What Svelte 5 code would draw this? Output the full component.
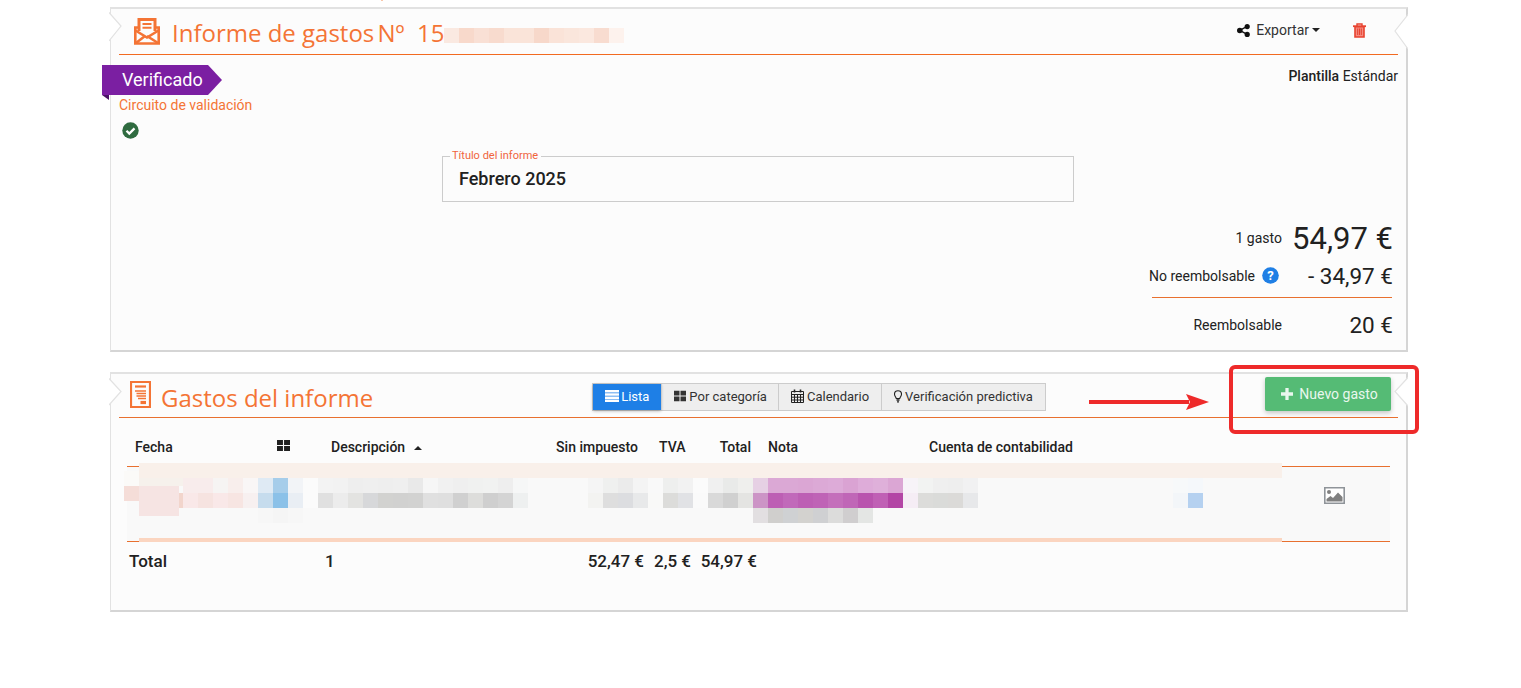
<script>
  // pixelated (redacted) areas of the page, coordinates relative to the page
  const CELL = 15;

  const titleBlur = ['#fae9e1', '#f8d9cb', '#f9e0d5', '#f8dbce', '#fae4d9', '#fae4d9', '#f7d8ca', '#fae3d8', '#fae6dc', '#fbe8df', '#f8dcd0', '#fdf2ed'];

  const rows = [
    { x: 183, y: 478, colors: ['#f8ecec', '#f8ecec', '#f6f4f3', '#f8eeec', '#f9f6f6', '#dfeaf4', '#a6cdea', '#f2f4f7', '#fbfbfb', '#f3f3f3', '#f2f2f2', '#eeeeee', '#efefef', '#eeeeee', '#efefef', '#e9e9e9', '#f6f6f6', '#f1f1f1', '#efefef', '#f0f1f0', '#f1f2f1', '#eeeeee', '#f6f7f7'] },
    { x: 183, y: 493, colors: ['#f9e8e8', '#f6e3e0', '#f9e8e8', '#f7e5e2', '#f7f0f0', '#c6dced', '#8bc1e8', '#e9eef4', '#fbfbfb', '#e0e0e0', '#ececec', '#e3e3e1', '#d7d8da', '#d2d2d0', '#d1d1d0', '#d2d2d1', '#e0e0e0', '#dfdfdf', '#d0d0d0', '#dddddb', '#cfcfcf', '#d4d4d4', '#eef0f0'] },
    { x: 258, y: 508, colors: ['#f7f7f7', '#f5f5f5', '#f7f7f7'] },
    { x: 588, y: 478, colors: ['#f5f5f5', '#eff0ef', '#ebebeb', '#f4f4f4', '#f9f9f9', '#eeefee', '#f2f2f2', '#fbfbfb', '#f0f0f0', '#e9eae9', '#efefed', '#e6d0e4', '#dba8d5', '#dba8d5', '#dba6d4', '#dca9d6', '#ddabd8', '#daa3d3', '#deacd9', '#dfb0da', '#dba6d4', '#f7f3f8', '#f2f3f2', '#efefef', '#eeeeee', '#f1f1f2'] },
    { x: 588, y: 493, colors: ['#f3f3f1', '#dedede', '#dcdde0', '#e8e9ea', '#f9f9f8', '#dcdcda', '#e1e2e5', '#fafafa', '#d9d9d9', '#d0d0d0', '#e4e4e2', '#cc94c6', '#bd5fb4', '#c169ba', '#bd5fb4', '#bf63b6', '#c46fbb', '#c066b7', '#b954ae', '#c060b5', '#b345a5', '#f5edf5', '#dcdcda', '#dadbd9', '#dbdad8', '#e7e8ea'] },
    { x: 753, y: 508, colors: ['#e2dfe1', '#d0cfcd', '#cfd1d3', '#d3d2cf', '#cfd0d2', '#dcdcdb', '#d0cecf', '#e4e6e4'] },
    { x: 1173, y: 478, colors: ['#f7f9fa', '#f5f8fb'] },
    { x: 1173, y: 493, colors: ['#f3f6f9', '#b5d1f0'] }
  ];

  const cells = rows.flatMap((r) => r.colors.map((c, i) => ({ x: r.x + i * CELL, y: r.y, w: CELL, h: CELL, c })));

  const blocks = [
    { x: 124, y: 471, w: 15, h: 15, c: '#fbfaf8' },
    { x: 139, y: 478, w: 44, h: 8, c: '#f6f1ec' },
    { x: 124, y: 486, w: 15, h: 15, c: '#f5ddd8' },
    { x: 139, y: 486, w: 40, h: 30, c: '#f6e4e3' },
    { x: 179, y: 493, w: 4, h: 15, c: '#f2d5cc' }
  ];

  const tabs = [
    { label: 'Lista', icon: 'list', active: true },
    { label: 'Por categoría', icon: 'grid' },
    { label: 'Calendario', icon: 'calendar' },
    { label: 'Verificación predictiva', icon: 'bulb' }
  ];
</script>

{#snippet grid(size)}
  <svg width={size} height={size} viewBox="0 0 14 14" fill="currentColor"><path d="M0 1h6.400v5.500H0zM7.600 1H14v5.500H7.600zM0 7.600h6.400V13H0zM7.600 7.600H14V13H7.600z"/></svg>
{/snippet}

<div class="page">
  <span class="speck"></span>

  <section class="panel first">
    <svg class="notch left" width="14" height="30" viewBox="0 0 14 30"><path d="M0 0.500 L12 14 L0 29" fill="#fff" stroke="#e2e2e2" stroke-width="1.200"/></svg>
    <svg class="notch right" width="14" height="36" viewBox="0 0 14 36"><path d="M14 0.500 L1 17 L14 35" fill="#fff" stroke="#e2e2e2" stroke-width="1.200"/></svg>

    <header class="head">
      <svg class="head-icon" width="26" height="27" viewBox="0 0 26 27" fill="none" stroke="#f47435">
        <path d="M5 13V1.500h16V13" stroke-width="3"/>
        <path d="M8.500 6h9M8.500 9.800h9" stroke-width="2"/>
        <path d="M5 9.500H1.300v16h23.400v-16H21" stroke-width="2.600"/>
        <path d="M1.500 12.500l11.500 7 11.500-7M2 25l9-7" stroke-width="2.600"/>
        <path d="M13 18l11 7" stroke-width="2.600"/>
      </svg>
      <h1>Informe de gastos <span class="tight">Nº&nbsp; 15</span></h1>
      <div class="blur">
        {#each titleBlur as c}
          <span style:background={c}></span>
        {/each}
      </div>
      <div class="head-actions">
        <span class="export">
          <svg width="13" height="13" viewBox="0 0 13 13" fill="#111"><circle cx="2.800" cy="6.500" r="2.800"/><circle cx="10.200" cy="2.600" r="2.600"/><circle cx="10.200" cy="10.400" r="2.600"/><path d="M2.400 5.800l7.500-4 .6 1.300-7.500 4zM3 5.800l7.500 4-.6 1.300-7.500-4z"/></svg>
          Exportar<i class="caret"></i>
        </span>
        <svg class="trash" width="13" height="15" viewBox="0 0 13 15" fill="none" stroke="#e8432f"><path d="M0 3.200h13" stroke-width="1.800"/><path d="M4 3V1h5v2" stroke-width="1.400"/><path d="M2 3.800h9V14H2z" fill="#f58a80" stroke-width="1.600"/><path d="M4.700 5.500v6.500M6.500 5.500v6.500M8.300 5.500v6.500" stroke-width="1"/></svg>
      </div>
    </header>

    <div class="body">
      <div class="status-row">
        <div>
          <div class="ribbon"><span>Verificado</span></div>
          <div class="circuit">Circuito de validación</div>
          <svg class="check" width="17" height="17" viewBox="0 0 17 17"><circle cx="8.500" cy="8.500" r="8.200" fill="#2f6b40"/><path d="M4.500 8.800l2.800 2.800 5.200-5.200" fill="none" stroke="#fff" stroke-width="2.300"/></svg>
        </div>
        <div class="template"><b>Plantilla</b> Estándar</div>
      </div>

      <fieldset class="title-field">
        <legend>Título del informe</legend>
        <div>Febrero 2025</div>
      </fieldset>

      <div class="totals">
        <div class="line main"><span class="lbl">1 gasto</span><span class="val">54,97 €</span></div>
        <div class="line second">
          <span class="lbl">No reembolsable
            <svg class="help" width="17" height="17" viewBox="0 0 17 17"><circle cx="8.500" cy="8.500" r="8.300" fill="#1f7fe5"/><text x="8.500" y="13" text-anchor="middle" fill="#fff">?</text></svg>
          </span>
          <span class="val">- 34,97 €</span>
        </div>
        <div class="line third"><span class="lbl">Reembolsable</span><span class="val">20 €</span></div>
      </div>
    </div>
  </section>

  <section class="panel expenses">
    <svg class="notch left" width="14" height="28" viewBox="0 0 14 28"><path d="M0 0.500 L12 13.500 L0 27" fill="#fff" stroke="#e2e2e2" stroke-width="1.200"/></svg>
    <svg class="notch right" width="14" height="30" viewBox="0 0 14 30"><path d="M14 0.500 L1 14.500 L14 29" fill="#fff" stroke="#e2e2e2" stroke-width="1.200"/></svg>

    <header class="head sub">
      <svg class="head-icon" width="21" height="27" viewBox="0 0 21 27" fill="none" stroke="#f47435">
        <path d="M1 1h19v25H1z" stroke-width="2.200"/>
        <path d="M5 5.500h11" stroke-width="2.200"/>
        <path d="M5 10h11M6.500 12.500h9.500M6.500 15h9.500M8 17.500h8" stroke-width="1.300"/>
        <path d="M10.500 21.500h5.500" stroke-width="3.200"/>
      </svg>
      <h2>Gastos del informe</h2>
      <nav class="tabs">
        {#each tabs as tab}
          <span class="tab" class:active={tab.active}>
            {#if tab.icon === 'list'}
              <svg width="14" height="12" viewBox="0 0 14 12" fill="#fff"><path d="M0 0h14v2.500H0zM0 3.200h14v2.500H0zM0 6.400h14v2.500H0zM0 9.500h14V12H0z"/></svg>
            {:else if tab.icon === 'grid'}
              {@render grid(12)}
            {:else if tab.icon === 'calendar'}
              <svg width="13" height="14" viewBox="0 0 13 14" fill="none" stroke="#222"><path d="M.5 2.500h12v11H.5z"/><path d="M.5 5.500h12M.5 8.200h12M.5 11h12M3.500 5.500v8M6.500 5.500v8M9.500 5.500v8"/><path d="M3.500 0.500v3M9.500 0.500v3" stroke-width="1.600"/></svg>
            {:else}
              <svg width="8" height="13" viewBox="0 0 8 13" fill="none" stroke="#222"><path d="M2.300 8.500C1.800 6.800.5 6 .5 4.200a3.500 3.500 0 0 1 7 0C7.500 6 6.200 6.800 5.700 8.500z" stroke-width="1.100"/><path d="M2.500 10h3M3 11.800h2" stroke-width="1.300"/></svg>
            {/if}
            {tab.label}
          </span>
        {/each}
      </nav>
      <button class="add">
        <svg width="12" height="12" viewBox="0 0 11 11" fill="#e9f7ee"><path d="M4 0h3v4h4v3H7v4H4V7H0V4h4z"/></svg>
        Nuevo gasto
      </button>
    </header>

    <table>
      <colgroup>
        <col style="width:143px" /><col style="width:53px" /><col style="width:225px" /><col style="width:100px" />
        <col style="width:47px" /><col style="width:66px" /><col style="width:160px" /><col style="width:361px" /><col />
      </colgroup>
      <thead>
        <tr>
          <th class="c-date">Fecha</th>
          <th class="c-cat">{@render grid(13)}</th>
          <th class="c-desc">Descripción <i class="sort"></i></th>
          <th class="num">Sin impuesto</th>
          <th class="c-tva">TVA</th>
          <th class="num">Total</th>
          <th class="c-note">Nota</th>
          <th class="c-acc">Cuenta de contabilidad</th>
          <th></th>
        </tr>
      </thead>
      <tbody>
        <tr>
          <td colspan="8"></td>
          <td class="pic">
            <svg width="21" height="17" viewBox="0 0 21 17"><path d="M.8.800h19.400v15.400H.8z" fill="#fff" stroke="#8f9499" stroke-width="1.600"/><circle cx="5" cy="5" r="2" fill="#808080"/><path d="M2.500 14.500v-2.500l4-3 2.500 2 5-5.500 4.500 4.500v4.500z" fill="#808080"/></svg>
          </td>
        </tr>
      </tbody>
      <tfoot>
        <tr>
          <td class="f-first">Total</td>
          <td></td>
          <td class="f-count">1</td>
          <td class="f-num">52,47 €</td>
          <td class="f-num">2,5 €</td>
          <td class="f-num">54,97 €</td>
          <td colspan="3"></td>
        </tr>
      </tfoot>
    </table>
  </section>

  <!-- mosaic that hides private values -->
  <span class="band top"></span>
  <span class="band bottom"></span>
  {#each [...blocks, ...cells] as m}
    <span class="px" style="left:{m.x}px;top:{m.y}px;width:{m.w}px;height:{m.h}px;background:{m.c}"></span>
  {/each}

  <!-- annotation drawn on top of the screenshot -->
  <span class="callout"></span>
  <svg class="arrow" width="124" height="20" viewBox="0 0 124 20"><path d="M0 8h100v4H0z" fill="#ee2a2a"/><path d="M97 2l23 8-23 8 4-8z" fill="#ee2a2a"/></svg>
</div>

<style>
  :global(body) {
    margin: 0;
    background: #fff;
    font-family: Roboto, 'Liberation Sans', sans-serif;
    font-size: 14px;
    color: #212121;
  }

  .page {
    position: relative;
    width: 1298px;
    padding: 7px 0 0 110px;
    height: 681px;
  }

  .speck {
    position: absolute;
    left: 381px;
    top: 0;
    width: 2px;
    height: 1px;
    background: #f9c7ab;
  }

  .panel {
    position: relative;
    box-sizing: border-box;
    background: #fcfcfc;
    border: 1px solid #e2e2e2;
    border-top-width: 2px;
    border-right: 2px solid #d5d5d5;
    border-bottom: 2px solid #d5d5d5;
  }

  .first { height: 345px; }

  .expenses {
    height: 240px;
    margin-top: 20px;
  }

  .notch { position: absolute; }
  .notch.left { left: -2px; }
  .notch.right { right: -2px; }
  .first .notch.left { top: 3px; }
  .first .notch.right { top: 5px; }
  .expenses .notch.left { top: 4px; }
  .expenses .notch.right { top: 3px; }

  .head {
    display: flex;
    align-items: center;
    height: 45px;
    margin: 0 8px;
    border-bottom: 1px solid #f26a21;
  }

  .head.sub {
    height: 43px;
    margin-right: 8px;
    border-bottom-color: #e8702f;
  }

  h1, h2 {
    margin: 0;
    font-family: 'Open Sans', sans-serif;
    font-size: 24px;
    font-weight: 400;
    color: #f47435;
    white-space: nowrap;
  }

  h1 { margin: 2px 0 0 12px; }
  h2 { margin: 4px 0 0 10px; }
  .tight { margin-left: -3px; }

  .head-icon { margin-left: 15px; flex-shrink: 0; }
  .head.sub .head-icon { margin-left: 11px; margin-top: -3px; }

  .blur {
    display: flex;
    height: 15px;
    margin: 7px 0 0 -1px;
  }

  .blur span { width: 15px; }

  .head-actions {
    margin-left: auto;
    display: flex;
    align-items: center;
    gap: 33px;
    margin-right: 32px;
    margin-top: -3px;
  }

  .export { display: flex; align-items: center; gap: 6px; color: #333; font-size: 14px; }

  .caret {
    display: inline-block;
    margin-left: -3px;
    border: 4px solid transparent;
    border-top-color: #222;
    border-bottom: 0;
  }

  .body { padding: 0 8px; }

  .status-row {
    display: flex;
    justify-content: space-between;
    align-items: flex-start;
    height: 101px;
  }

  .ribbon {
    position: relative;
    width: 120px;
    height: 30px;
    margin: 10px 0 0 -17px;
    display: block;
  }

  .ribbon span {
    display: flex;
    align-items: center;
    height: 100%;
    padding: 0 0 2px 20px;
    box-sizing: border-box;
    background: #7b1fa2;
    color: #fff;
    font-size: 18px;
    clip-path: polygon(0 0, 106px 0, 120px 15px, 106px 30px, 0 30px);
  }

  .ribbon::after {
    content: '';
    position: absolute;
    left: 0;
    top: 30px;
    border-top: 5px solid #4a1266;
    border-left: 7px solid transparent;
  }

  .circuit {
    line-height: 20px;
    color: #f47435;
    font-size: 14px;
  }

  .check { display: block; margin: 7px 0 0 3px; }

  .template {
    margin-top: 13px;
    font-size: 14px;
    color: #222;
  }

  .template b { font-weight: 500; }

  .title-field {
    box-sizing: border-box;
    width: 632px;
    height: 53px;
    margin: -7px 0 0 323px;
    padding: 0 16px;
    border: 1px solid #ccc;
    min-width: 0;
  }

  .title-field legend {
    margin-left: -9px;
    padding: 0 3px 2px 2px;
    font-size: 11px;
    color: #f0643c;
  }

  .title-field div {
    font-size: 18px;
    font-weight: 500;
    line-height: 30px;
  }

  .totals { margin-top: 16px; padding-right: 5px; }

  .line {
    display: grid;
    grid-template-columns: minmax(0, 1fr) 110px;
    align-items: center;
  }

  .lbl {
    justify-self: end;
    display: flex;
    align-items: center;
    gap: 7px;
    margin-right: 1px;
    color: #222;
    white-space: nowrap;
  }

  .val { text-align: right; white-space: nowrap; }
  .main { height: 40px; }
  .main .val { font-size: 31px; }

  .second {
    margin-left: 1033px;
    margin-right: 1px;
    padding-bottom: 4px;
    border-bottom: 1px solid #e8702f;
    box-sizing: border-box;
    height: 40px;
  }

  .second .lbl { margin-right: 3px; }
  .second .val, .third .val { font-size: 22.500px; }
  .second .val { margin-right: -1px; }
  .third { height: 54px; padding-bottom: 2px; }

  .help text { font: 700 13px Roboto, sans-serif; }

  .tabs {
    display: flex;
    height: 28px;
    margin: 3px 0 0 219px;
    box-sizing: border-box;
    border: 1px solid #ccc;
    background: #eee;
    font-size: 13px;
  }

  .tab {
    display: flex;
    align-items: center;
    gap: 3px;
    padding: 0 12px 2px;
    border-left: 1px solid #ccc;
    color: #333;
  }

  .tab:first-child { border-left: 0; padding-right: 12px; gap: 2px; }
  .tab:nth-child(2) { padding-right: 11px; }

  .tab.active {
    background: #1e7fe6;
    color: #fff;
    box-shadow: 0 1px 3px rgba(0, 0, 0, 0.3);
  }

  .add {
    display: flex;
    align-items: center;
    justify-content: center;
    gap: 6px;
    width: 126px;
    height: 34px;
    margin: -3px 7px 0 auto;
    padding: 0 0 0 3px;
    border: 0;
    border-radius: 2px;
    background: #55bb75;
    color: #e9f7ee;
    font: 400 14px Roboto, sans-serif;
    box-shadow: 0 2px 5px rgba(0, 0, 0, 0.22);
  }

  table {
    width: 1263px;
    margin-left: 16px;
    border-collapse: collapse;
    table-layout: fixed;
  }

  th {
    height: 48px;
    padding: 10px 0 0;
    box-sizing: border-box;
    font-size: 14px;
    font-weight: 500;
    text-align: left;
    white-space: nowrap;
    color: #212121;
  }

  th.num { text-align: right; padding-right: 10px; }
  .c-date { padding-left: 8px; }
  .c-cat { padding-left: 7px; }
  .c-desc { padding-left: 8px; }
  .c-tva { padding-left: 11px; }
  .c-note { padding-left: 7px; }
  .c-acc { padding-left: 8px; }

  .sort {
    display: inline-block;
    margin-left: 5px;
    vertical-align: 2px;
    border: 4px solid transparent;
    border-bottom-color: #222;
    border-top: 0;
  }

  tbody tr { background: #f9f9f9; }

  tbody td {
    box-sizing: border-box;
    height: 75px;
    padding: 0;
    border-top: 1px solid #e8702f;
    border-bottom: 1px solid #e8702f;
  }

  tbody td.pic { padding: 20px 4px 0 0; vertical-align: top; }
  .pic svg { display: block; margin: 0 auto; }

  tfoot td {
    height: 42px;
    padding: 0 0 2px;
    box-sizing: border-box;
    font-size: 17px;
    font-weight: 500;
    white-space: nowrap;
  }

  .f-first { padding-left: 2px; }
  .f-count { padding-left: 2px; }
  .f-num { text-align: right; padding-right: 4px; }

  .px, .band { position: absolute; display: block; }

  .band {
    left: 139px;
    width: 1143px;
  }

  .band.top { top: 463px; height: 15px; background: #f9f0ea; }
  .band.bottom { top: 538px; height: 4px; background: #fbd5c0; }

  .callout {
    position: absolute;
    left: 1229px;
    top: 365px;
    width: 190px;
    height: 69px;
    box-sizing: border-box;
    border: 4px solid #ee2a2a;
    border-radius: 6px;
  }

  .arrow {
    position: absolute;
    left: 1089px;
    top: 392px;
  }
</style>
